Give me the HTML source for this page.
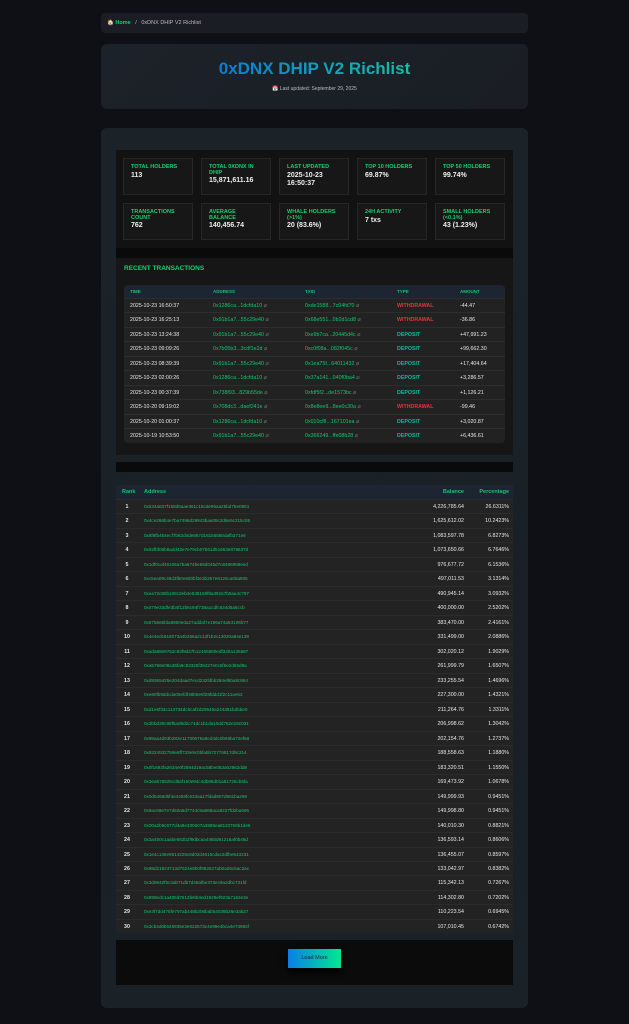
<!DOCTYPE html>
<html><head><meta charset="utf-8"><style>
*{box-sizing:border-box;margin:0;padding:0}
body{width:629px;height:1024px;background:#0e1016;font-family:"Liberation Sans",sans-serif;color:#e6e6e6;position:relative;overflow:hidden}
.abs{position:absolute}
.bc{left:101px;top:13px;width:427px;height:20px;background:#1a1d23;border-radius:4px;font-size:5.5px;padding:7px 6px;color:#bbb}
.bc b{color:#10d070;font-weight:bold}
.hdr{left:101px;top:44px;width:427px;height:65px;background:linear-gradient(135deg,#1c2229,#1a1e24);border-radius:6px;text-align:center}
.hdr h1{font-size:17px;margin-top:15px;font-weight:bold;background:linear-gradient(90deg,#0a78d8 25%,#14c4a4 75%);-webkit-background-clip:text;color:transparent}
.hdr p{font-size:5px;color:#bbb;margin-top:7px}
.main{left:101px;top:128px;width:427px;height:880px;background:linear-gradient(180deg,#1b2328,#1a2026 60%,#1b2227);border-radius:6px}
.stats{left:116px;top:150px;width:397px;height:98px;background:#121212}
.card{position:absolute;width:70px;height:37px;background:#171717;border:1px solid #262626;padding:6px 7px}
.card .l{font-size:5.5px;color:#18d070;font-weight:bold;line-height:5.5px}
.card .v{font-size:7px;color:#eee;font-weight:bold;margin-top:1px;line-height:8px}
.bar{left:116px;width:397px;height:10px;background:#0a0a0a}
.rt{left:116px;top:258px;width:397px;height:197px;background:#161616}
.rt h3{position:absolute;left:8px;top:7px;font-size:6.5px;color:#18d070}
.tt{left:124px;top:285px;width:381px;height:158px;background:#222;border-radius:4px;overflow:hidden}
.row{position:absolute;left:0;width:100%;height:14.44px;font-size:5.3px;line-height:14.44px;border-top:1px solid #2d2d2d}
.row span{position:absolute}
.g{color:#13c46c}.r{color:#e0353d}.t{color:#14b7a0}
.rl{left:116px;top:485px;width:397px;height:448px;background:#232323;overflow:hidden}
.rr{position:absolute;left:0;width:100%;height:14.48px;font-size:5.3px;line-height:14.48px;border-top:1px solid #2b2b2b}
.rr span{position:absolute}
.lm{left:116px;top:940px;width:397px;height:45px;background:#0b0b0b}
.btn{left:288px;top:949px;width:53px;height:19px;background:linear-gradient(90deg,#0a7ee8,#00e890);font-size:5.5px;color:#123;text-align:center;line-height:19px;box-shadow:0 4px 8px #000}
</style></head><body>
<div class="abs bc">🏠 <b>Home</b> &nbsp;&nbsp;/&nbsp;&nbsp; 0xDNX DHIP V2 Richlist</div>
<div class="abs hdr"><h1>0xDNX DHIP V2 Richlist</h1><p>📅 Last updated: September 29, 2025</p></div>
<div class="abs main"></div>
<div class="abs stats">
<div class="card" style="left:7px;top:8px"><div class="l">TOTAL HOLDERS</div><div class="v">113</div></div>
<div class="card" style="left:85px;top:8px"><div class="l">TOTAL 0XDNX IN DHIP</div><div class="v">15,871,611.16</div></div>
<div class="card" style="left:163px;top:8px"><div class="l">LAST UPDATED</div><div class="v">2025-10-23<br>16:50:37</div></div>
<div class="card" style="left:241px;top:8px"><div class="l">TOP 10 HOLDERS</div><div class="v">69.87%</div></div>
<div class="card" style="left:319px;top:8px"><div class="l">TOP 50 HOLDERS</div><div class="v">99.74%</div></div>
<div class="card" style="left:7px;top:53px"><div class="l">TRANSACTIONS COUNT</div><div class="v">762</div></div>
<div class="card" style="left:85px;top:53px"><div class="l">AVERAGE BALANCE</div><div class="v">140,456.74</div></div>
<div class="card" style="left:163px;top:53px"><div class="l">WHALE HOLDERS (&gt;1%)</div><div class="v">20 (83.6%)</div></div>
<div class="card" style="left:241px;top:53px"><div class="l">24H ACTIVITY</div><div class="v">7 txs</div></div>
<div class="card" style="left:319px;top:53px"><div class="l">SMALL HOLDERS (&lt;0.1%)</div><div class="v">43 (1.23%)</div></div>
</div>
<div class="abs bar" style="top:248px"></div>
<div class="abs rt"><h3>RECENT TRANSACTIONS</h3></div>
<div class="abs tt">
<div class="row" style="top:0;height:13px;line-height:13px;background:#1d2533;border:0;font-size:4.5px;font-weight:bold;color:#18c070"><span style="left:6px">TIME</span><span style="left:89px">ADDRESS</span><span style="left:181px">TXID</span><span style="left:273px">TYPE</span><span style="left:336px">AMOUNT</span></div>
<div id="tx"></div>
</div>
<div class="abs bar" style="top:462px"></div>
<div class="abs rl">
<div class="rr" style="top:0;height:14px;line-height:14px;background:#1d2533;border:0;font-size:5.5px;font-weight:bold;color:#18c070"><span style="left:6px">Rank</span><span style="left:28px">Address</span><span style="right:49px">Balance</span><span style="right:4px">Percentage</span></div>
<div id="rl"></div>
</div>
<div class="abs lm"></div>
<div class="abs btn">Load More</div>
<script>
var tx=[["2025-10-23 16:50:37","0x1286ca...1dcfda10","0xde1588...7c04fd70","WITHDRAWAL","-44.47"],
["2025-10-23 16:25:13","0x91b1a7...55c29e40","0x68e551...0b2d1cd8","WITHDRAWAL","-36.86"],
["2025-10-23 13:24:38","0x91b1a7...55c29e40","0xe9b7ca...20445d4c","DEPOSIT","+47,991.23"],
["2025-10-23 09:09:26","0x7b05b3...3cdf1e2d","0xc0f08a...082f045c","DEPOSIT","+99,662.30"],
["2025-10-23 08:39:39","0x91b1a7...55c29e40","0x1ea75f...64011432","DEPOSIT","+17,404.64"],
["2025-10-23 02:00:26","0x1286ca...1dcfda10","0x37a141...040f0ba4","DEPOSIT","+3,286.57"],
["2025-10-23 00:37:39","0x738f93...829b55de","0xfdf5f2...de1573bc","DEPOSIT","+1,126.21"],
["2025-10-20 09:19:02","0x708dc3...daef241e","0x8e8ee9...8ee0c30a","WITHDRAWAL","-99.46"],
["2025-10-20 01:00:37","0x1286ca...1dcfda10","0x010cf8...167101ea","DEPOSIT","+3,020.87"],
["2025-10-19 10:53:50","0x91b1a7...55c29e40","0x366249...ffe08b28","DEPOSIT","+6,436.61"]];
var h="";tx.forEach(function(r,i){h+='<div class="row" style="top:'+(13+i*14.44)+'px"><span style="left:6px">'+r[0]+'</span><span class="g" style="left:89px">'+r[1]+' <span style="position:static;color:#777">⌀</span></span><span class="g" style="left:181px">'+r[2]+' <span style="position:static;color:#777">⌀</span></span><span class="'+(r[3]=="DEPOSIT"?"t":"r")+'" style="left:273px;font-weight:bold">'+r[3]+'</span><span style="left:336px">'+r[4]+'</span></div>'});
document.getElementById("tx").innerHTML=h;
var rl=[["0x534a837f158d5aae361c15cde95aa25bd75e0861","4,226,785.64","26.6311%"],["0x4ce266b4e7ba7498d29943baa08c2d8e5c215c08","1,625,612.02","10.2423%"],["0x6f8fb454ecf7b62d4de867d18155580dafb371e6","1,083,597.78","6.8273%"],["0x02fbf06b8add42e7e79cb07b61d51663e879637d","1,073,650.66","6.7646%"],["0x1df0caf49106a7ba674be58d045d7c8496959eed","976,677.72","6.1536%"],["0xc5ea09c49d3fb0e8d0bf3e3b257e6126ca05a805","497,011.53","3.1314%"],["0xea72c90b108c2eb4e538158f8a39157b0aa4c797","490,945.14","3.0932%"],["0x479e33dfe3b4f12b6c94f738a1cdfc634d5a6ccb","400,000.00","2.5202%"],["0x675665fda6860eda27addaf7e196a74a53106b77","383,470.00","2.4161%"],["0x4e4edc618073a4b266a2c13f1b2c13020a84e139","331,499.00","2.0886%"],["0xada98e9752c83f9d27b12466580edf340a136587","302,020.12","1.9029%"],["0xa5798e08a36fa9c83326f36427e0c5f6e2d66d8a","261,999.79","1.6507%"],["0xd9365425e204daad7ecd232fdbb284ef6ba8c864","233,255.54","1.4696%"],["0xe80fb9ddcda05efdf48b5e5f28fddd1f2c11ae52","227,300.00","1.4321%"],["0xd1e6f33c114734dc5caf2d29546a244361bd5be0","211,264.76","1.3311%"],["0x3bbd39c88f5ad8d2c74dc1b1da10dd762e18c031","206,998.62","1.3042%"],["0x98aa4d93b282e11730675a8ed4dc0b69ba72ef58","202,154.76","1.2737%"],["0x9324532759e8ff733e9c0bfa5b72776817d9c214","188,558.63","1.1880%"],["0x0f1692fa2634e0f2894d19ac58be053a02982dd8","183,320.51","1.1550%"],["0x3ea575925cd8af150e94c4db86d01a61725cb5fa","169,473.92","1.0678%"],["0x0d5468d5f4e4458fc633aa17fdad807d561ba269","149,999.93","0.9451%"],["0x9ac68e7e7d50a5d7744c9a868aca8227fd2ba506","149,998.80","0.9451%"],["0x00a2b9c677d4a9e330607a3886ea6110750b1de9","140,010.30","0.8821%"],["0x3a450c1aabe562b2f9dbcaa446bd91216af0b46d","136,593.14","0.8606%"],["0x1e4c145e9514226c6d02d4615cdac2dfbe543231","136,455.07","0.8597%"],["0x98d21924713d7524e8b0f882527ab0a26c6ac2ac","133,042.97","0.8382%"],["0x3d8942f5c3ab71db7d48afbe373ec9a2dbc731fd","115,342.13","0.7267%"],["0x898edc1a405d7512fe6b4ed1929ef923a7163e3e","114,302.80","0.7202%"],["0xe3f7dd475fe797ab448b206bab54038b26e3ab27","110,223.54","0.6945%"],["0x3cb4d6b645935e3e622573c4e99e4bca4e74983f","107,010.45","0.6742%"]];
h="";rl.forEach(function(r,i){h+='<div class="rr" style="top:'+(14+i*14.48)+'px"><span style="left:0;width:22px;text-align:center;font-weight:bold">'+(i+1)+'</span><span class="g" style="left:28px;font-size:4.6px">'+r[0]+'</span><span style="right:49px">'+r[1]+'</span><span style="right:4px">'+r[2]+'</span></div>'});
document.getElementById("rl").innerHTML=h;
</script>
</body></html>
